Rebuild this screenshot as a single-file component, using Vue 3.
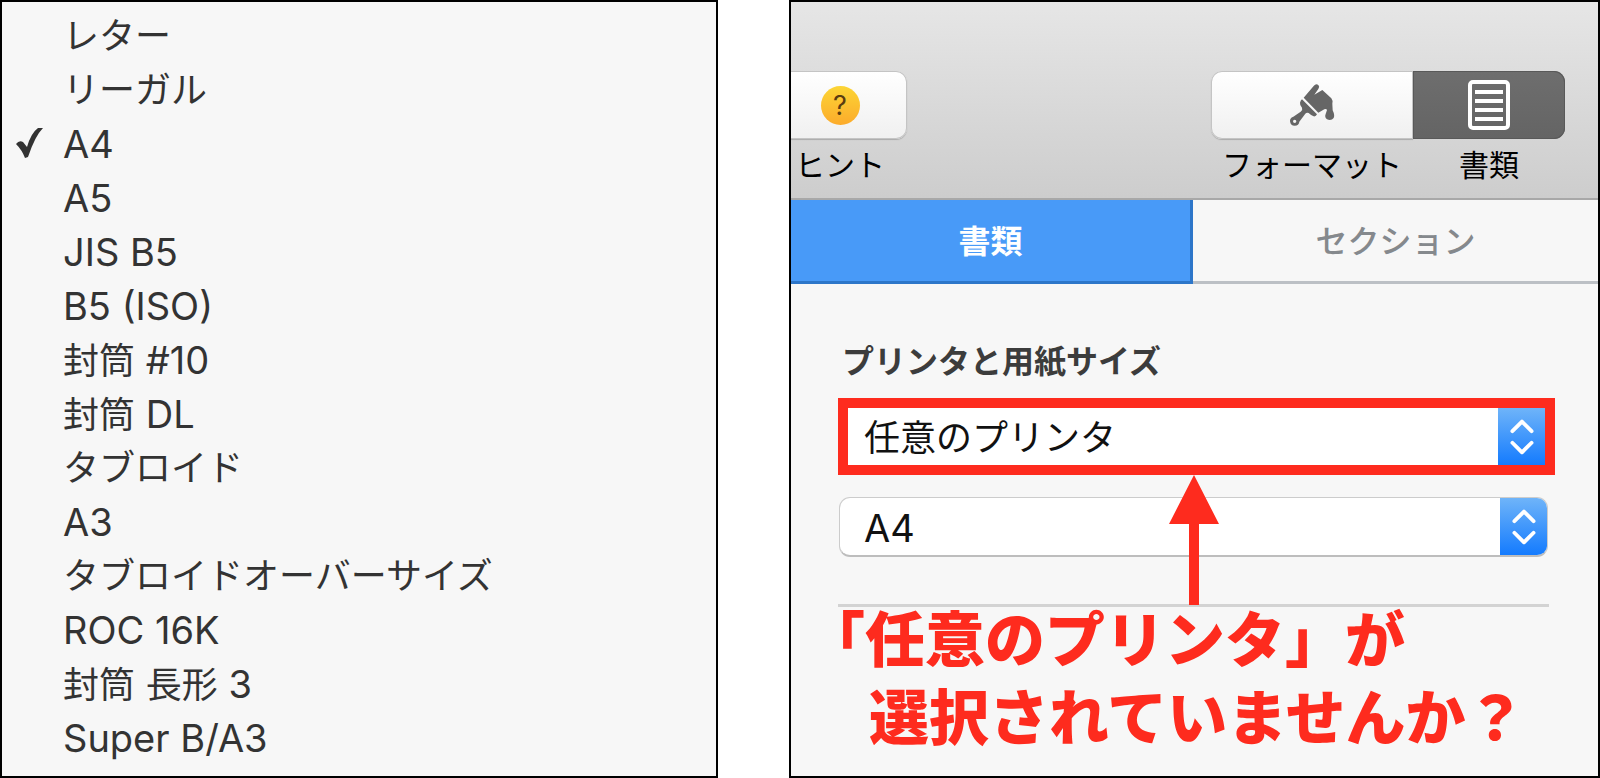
<template>
  <main class="page">
    <!-- paper size list -->
    <section class="panel">
      <ul class="menu" role="menu" aria-label="用紙サイズ">
        <li v-for="size in sizes" :key="size" role="none">
          <button
            class="menu-item"
            role="menuitemradio"
            :aria-checked="size === paper"
            @click="paper = size"
          >
            <span class="menu-check">
              <svg v-if="size === paper" viewBox="0 0 27 30">
                <path
                  d="M0 16 Q3 12 7 14 L11 19 Q15 5 22 0 L27 0 Q19 8 12 29 L9 30 Q6 22 0 16 Z"
                />
              </svg>
            </span>
            <span
              v-for="(part, i) in splitLabel(size)"
              :key="i"
              :class="{ latin: part.latin }"
              >{{ part.text }}</span
            >
          </button>
        </li>
      </ul>
    </section>

    <!-- document inspector -->
    <section class="panel">
      <header class="toolbar">
        <button class="tool tool-hint">
          <span class="tool-face">
            <span class="hint-badge">?</span>
          </span>
          <span class="tool-label">ヒント</span>
        </button>
        <div class="tool-group">
          <button class="tool tool-format">
            <span class="tool-face">
              <svg class="brush" viewBox="15 15 138 135">
                <path
                  d="M59 59 L89 24 Q96 15 103 21 Q108 26 103 33 L91 50 L115 36 L142 61 Q147 67 145 77 L146 97 Q153 112 149 120 Q142 129 129 124 Q121 118 125 108 L129 96 Q127 91 121 94 L103 104 Z"
                />
                <path
                  fill-rule="evenodd"
                  d="M54 64 L99 109 Q96 116 89 115 Q82 113 74 105 Q68 102 64 107 L46 131 A14 14 0 1 1 28 116 L50 101 Q57 96 54 89 Q47 82 48 74 Q50 67 54 64 Z M32 125 A5 5 0 1 0 32 135 A5 5 0 1 0 32 125 Z"
                />
              </svg>
            </span>
            <span class="tool-label">フォーマット</span>
          </button>
          <button class="tool tool-document">
            <span class="tool-face">
              <svg class="sheet" viewBox="0 0 42 50">
                <rect x="2" y="2" width="38" height="46" rx="3" />
                <path d="M7 12 H35 M7 21 H35 M7 30 H35 M7 39 H35" />
              </svg>
            </span>
            <span class="tool-label">書類</span>
          </button>
        </div>
      </header>

      <nav class="tabs" role="tablist">
        <button
          v-for="tab in tabs"
          :key="tab"
          class="tab"
          :class="{ active: tab === activeTab }"
          role="tab"
          :aria-selected="tab === activeTab"
          @click="activeTab = tab"
        >
          {{ tab }}
        </button>
      </nav>

      <div class="settings">
        <h2 id="printer-heading">プリンタと用紙サイズ</h2>
        <div class="picker highlighted">
          <select v-model="printer" aria-labelledby="printer-heading">
            <option>任意のプリンタ</option>
          </select>
          <svg class="stepper" viewBox="0 0 49 57">
            <path d="M15 23 L25 13 L35 23 M15 35 L25 45 L35 35" />
          </svg>
        </div>
        <div class="picker">
          <select v-model="paper" class="latin" aria-label="用紙サイズ">
            <option v-for="size in sizes" :key="size">{{ size }}</option>
          </select>
          <svg class="stepper" viewBox="0 0 49 57">
            <path d="M15 23 L25 13 L35 23 M15 35 L25 45 L35 35" />
          </svg>
        </div>
        <div class="divider">
          <svg class="arrow" viewBox="0 0 50 130">
            <path d="M25 0 L50 49 H30 V130 H20 V49 H0 Z" />
          </svg>
        </div>
        <p class="note">
          <span>「任意のプリンタ」が</span>
          <span class="note-second">選択されていませんか？</span>
        </p>
      </div>
    </section>
  </main>
</template>

<script setup>
import { ref } from 'vue';

const sizes = [
  'レター',
  'リーガル',
  'A4',
  'A5',
  'JIS B5',
  'B5 (ISO)',
  '封筒 #10',
  '封筒 DL',
  'タブロイド',
  'A3',
  'タブロイドオーバーサイズ',
  'ROC 16K',
  '封筒 長形 3',
  'Super B/A3',
];
const tabs = ['書類', 'セクション'];

const paper = ref('A4');
const printer = ref('任意のプリンタ');
const activeTab = ref('書類');

// latin letters are set a little larger than the kana next to them
function splitLabel(label) {
  return label.match(/[\x20-\x7e]+|[^\x20-\x7e]+/g).map((text) => ({
    text,
    latin: /^[\x20-\x7e]/.test(text),
  }));
}
</script>

<style>
body {
  margin: 0;
  background: #fff;
}
</style>

<style scoped>
.page {
  display: grid;
  grid-template-columns: 718fr 811fr;
  gap: 71px;
  min-height: 100vh;
  font-family: Inter, 'Noto Sans CJK JP', sans-serif;
  color: #333;
}
.page * {
  box-sizing: border-box;
}
.panel {
  min-width: 0;
  border: 2px solid #000;
  background: #f7f7f7;
}
button,
select {
  margin: 0;
  padding: 0;
  border: 0;
  background: none;
  font: inherit;
  color: inherit;
}

/* menu */
.menu {
  list-style: none;
  margin: 0;
  padding: 7px 0 11px;
}
.menu-item {
  display: flex;
  align-items: baseline;
  width: 100%;
  height: 54px;
  font-size: 36px;
  line-height: 54px;
  text-align: left;
  white-space: pre;
}
.menu-check {
  width: 61px;
  padding-left: 14px;
}
.menu-check svg {
  display: inline-block;
  width: 27px;
  height: 30px;
  fill: #333;
}
.latin {
  font-size: 38px;
}

/* toolbar */
.toolbar {
  display: flex;
  justify-content: space-between;
  padding: 69px 33px 13px 0;
  border-bottom: 2px solid #a8a8a8;
  background: linear-gradient(#e6e6e6, #cdcdcd);
  overflow: hidden;
}
.tool-group {
  display: flex;
}
.tool {
  display: flex;
  flex-direction: column;
  gap: 6px;
  color: #000;
}
.tool-face {
  display: flex;
  align-items: center;
  justify-content: center;
  width: 100%;
  height: 68px;
  background: linear-gradient(#fff, #f0f0f0);
  box-shadow: inset 0 0 0 1px #c4c4c4, 0 1px 1px #aaa;
}
.tool-label {
  width: 100%;
  font-size: 30px;
  line-height: 40px;
  text-align: center;
}
.tool-hint {
  width: 134px;
  margin-left: -18px;
}
.tool-hint .tool-face {
  border-radius: 11px;
}
.tool-format {
  width: 202px;
}
.tool-format .tool-face {
  border-radius: 11px 0 0 11px;
}
.tool-document {
  width: 152px;
}
.tool-document .tool-face {
  border-radius: 0 11px 11px 0;
  background: linear-gradient(#6e6e6e, #646464);
  box-shadow: inset 0 0 0 1px #595959;
}
.hint-badge {
  width: 39px;
  height: 39px;
  border-radius: 50%;
  background: linear-gradient(#fcd535, #fcab2b);
  color: #5a3c10;
  font-size: 27px;
  line-height: 39px;
}
.brush {
  width: 46px;
  height: 45px;
  fill: #666;
}
.sheet {
  width: 42px;
  height: 50px;
  fill: none;
  stroke: #fff;
  stroke-width: 4;
}

/* tabs */
.tabs {
  display: grid;
  grid-template-columns: 402fr 405fr;
}
.tab {
  height: 84px;
  padding-bottom: 4px;
  border-bottom: 3px solid #bcc0c5;
  font-size: 32px;
  font-weight: 500;
  color: #85898d;
}
.tab.active {
  border-right: 3px solid #2d76c9;
  border-bottom-color: #2d76c9;
  background: #489af8;
  font-weight: 700;
  color: #fff;
}

/* settings */
.settings {
  padding: 54px 43px 0 47px;
}
h2 {
  margin: 0 0 12px;
  padding-left: 4px;
  font-size: 32px;
  line-height: 48px;
  color: #3c3c3c;
}
.picker {
  display: flex;
  height: 60px;
  margin: 0 7px 0 1px;
  border: 1px solid #ccc;
  border-bottom: 2px solid #bdbdbd;
  border-radius: 11px;
  background: #fff;
  overflow: hidden;
}
.picker.highlighted {
  height: 77px;
  margin: 0 0 22px;
  border: 10px solid #fe2b1e;
  border-radius: 0;
}
.picker select {
  flex: 1;
  min-width: 0;
  padding: 2px 0 0 24px;
  appearance: none;
  font-size: 36px;
  color: #111;
}
.picker.highlighted select {
  padding-left: 16px;
}
.picker select.latin {
  font-size: 38px;
}
.stepper {
  width: 47px;
  height: 100%;
  background: linear-gradient(#6fb4f9, #147bfe);
  fill: none;
  stroke: #fff;
  stroke-width: 4;
  stroke-linecap: round;
  stroke-linejoin: round;
}
.divider {
  position: relative;
  height: 3px;
  margin: 47px 6px 0 0;
  background: #d3d3d3;
}
/* points up at the printer picker */
.arrow {
  position: absolute;
  bottom: 2px;
  left: 50%;
  width: 50px;
  height: 130px;
  margin-left: -25px;
  fill: #fe2b1e;
}
.note {
  display: flex;
  flex-direction: column;
  margin: -6px -20px 0 -33px;
  font-size: 60px;
  font-weight: 900;
  line-height: 78px;
  color: #fe2b1e;
  white-space: nowrap;
}
.note-second {
  padding-left: 64px;
}
</style>
